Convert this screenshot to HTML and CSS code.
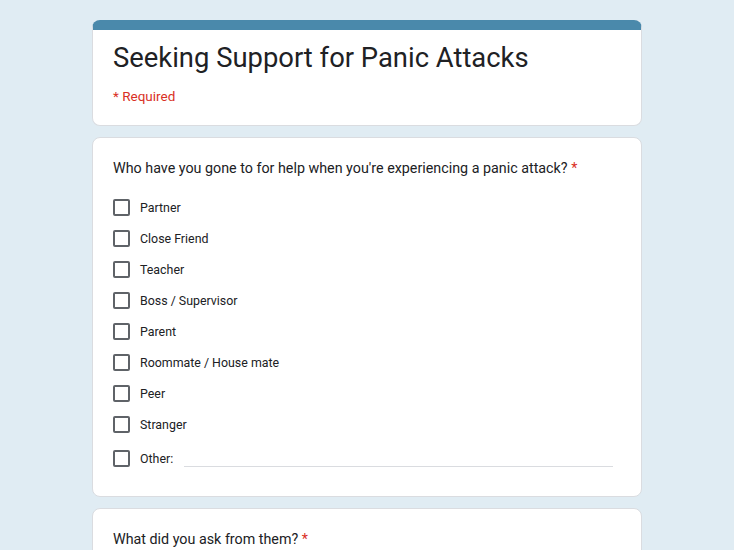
FILE: index.html
```html
<!DOCTYPE html>
<html lang="en">
<head>
<meta charset="utf-8">
<title>Seeking Support for Panic Attacks</title>
<link rel="stylesheet" href="styles.css">
</head>
<body>
<main class="form">
  <section class="card card-header">
    <h1 class="title">Seeking Support for Panic Attacks</h1>
    <div class="required-note">* Required</div>
  </section>

  <section class="card card-question">
    <div class="question">Who have you gone to for help when you're experiencing a panic attack? <span class="star">*</span></div>
    <div class="options">
      <label class="option"><span class="box"></span><span class="label">Partner</span></label>
      <label class="option"><span class="box"></span><span class="label">Close Friend</span></label>
      <label class="option"><span class="box"></span><span class="label">Teacher</span></label>
      <label class="option"><span class="box"></span><span class="label">Boss / Supervisor</span></label>
      <label class="option"><span class="box"></span><span class="label">Parent</span></label>
      <label class="option"><span class="box"></span><span class="label">Roommate / House mate</span></label>
      <label class="option"><span class="box"></span><span class="label">Peer</span></label>
      <label class="option"><span class="box"></span><span class="label">Stranger</span></label>
      <label class="option option-other"><span class="box"></span><span class="label">Other:</span><span class="other-input"></span></label>
    </div>
  </section>

  <section class="card card-question">
    <div class="question">What did you ask from them? <span class="star">*</span></div>
  </section>
</main>
</body>
</html>
```

FILE: styles.css
```css
html, body {
  margin: 0;
  padding: 0;
}
body {
  background: #e0ecf3;
  font-family: Roboto, "Liberation Sans", Arial, sans-serif;
  color: #202124;
  height: 550px;
  overflow: hidden;
}
.form {
  width: 550px;
  margin: 0 auto;
  padding-top: 20px;
  display: flex;
  flex-direction: column;
  gap: 11px;
}
.card {
  background: #fff;
  border: 1px solid #dadce0;
  border-radius: 8px;
  padding: 0 20px;
}
.card-header {
  border-top: 10px solid #4a89ab;
  padding-top: 8px;
  padding-bottom: 19px;
}
.title {
  margin: 0;
  font-size: 27.4px;
  font-weight: 400;
  line-height: 40px;
  color: #202124;
}
.required-note {
  margin-top: 8px;
  font-size: 13.5px;
  line-height: 20px;
  color: #d93025;
}
.card-question {
  padding-top: 18px;
  padding-bottom: 20px;
}
.question {
  font-size: 14.3px;
  line-height: 24px;
  color: #202124;
}
.star {
  color: #d93025;
}
.options {
  margin-top: 12px;
  display: flex;
  flex-direction: column;
}
.option {
  height: 31px;
  display: flex;
  align-items: center;
}
.option-other {
  height: 36px;
}
.box {
  width: 13px;
  height: 13px;
  border: 2px solid #5f6368;
  border-radius: 2px;
  flex: none;
}
.label {
  margin-left: 10px;
  font-size: 12.4px;
  color: #202124;
}
.other-input {
  flex: 1;
  margin-left: 11px;
  margin-right: 8px;
  height: 26px;
  align-self: flex-start;
  border-bottom: 1px solid #dadce0;
}
```
